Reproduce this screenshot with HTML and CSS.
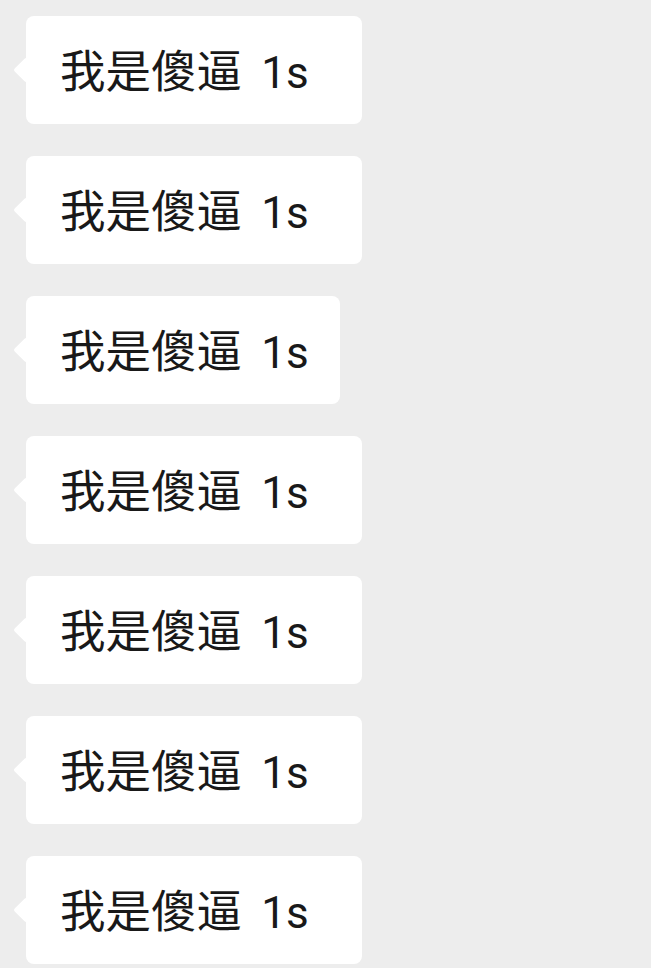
FILE: index.html
```html
<!DOCTYPE html>
<html lang="zh">
<head>
<meta charset="utf-8">
<link rel="stylesheet" href="styles.css">
</head>
<body>
<div class="list">
  <div class="bubble"><span class="text">我是傻逼 <span class="num">1s</span></span></div>
  <div class="bubble"><span class="text">我是傻逼 <span class="num">1s</span></span></div>
  <div class="bubble bubble--short"><span class="text">我是傻逼 <span class="num">1s</span></span></div>
  <div class="bubble"><span class="text">我是傻逼 <span class="num">1s</span></span></div>
  <div class="bubble"><span class="text">我是傻逼 <span class="num">1s</span></span></div>
  <div class="bubble"><span class="text">我是傻逼 <span class="num">1s</span></span></div>
  <div class="bubble"><span class="text">我是傻逼 <span class="num">1s</span></span></div>
</div>
</body>
</html>
```
FILE: styles.css
```css
html, body {
  margin: 0;
  padding: 0;
  background: #ededed;
}
body {
  height: 968px;
  overflow: hidden;
}
.list {
  display: flex;
  flex-direction: column;
  gap: 32px;
  padding: 16px 0 0 26px;
}
.bubble {
  position: relative;
  box-sizing: border-box;
  width: 336px;
  height: 108px;
  background: #ffffff;
  border-radius: 8px;
  display: flex;
  align-items: center;
  padding-left: 34px;
  padding-bottom: 4px;
}
.bubble--short {
  width: 314px;
}
.bubble::before {
  content: "";
  position: absolute;
  left: -9px;
  top: 45px;
  width: 18px;
  height: 18px;
  background: #ffffff;
  transform: rotate(45deg);
  border-radius: 2px;
}
.text {
  font-family: Roboto, "Noto Sans CJK SC", sans-serif;
  font-size: 45.5px;
  color: #191919;
  white-space: nowrap;
}
.num {
  font-size: 44px;
  margin-left: 8px;
}
```
